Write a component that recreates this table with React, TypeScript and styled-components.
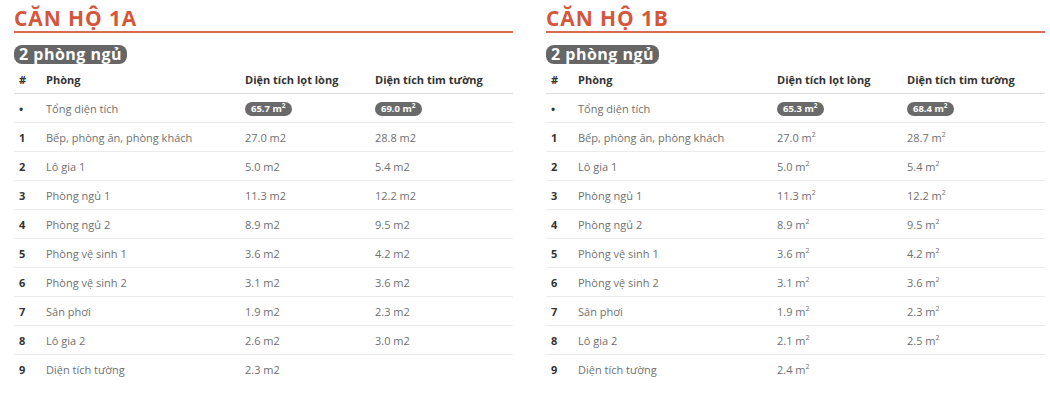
import React from 'react';
import styled, { createGlobalStyle } from 'styled-components';

const GlobalStyle = createGlobalStyle`
  body {
    margin: 0;
    background: #ffffff;
    font-family: "Open Sans", "Liberation Sans", sans-serif;
  }
`;

interface Room {
  no: string;
  name: string;
  inner: string;
  outer?: string;
}

interface Apartment {
  title: string;
  total: [string, string];
  sup: boolean;
  rooms: Room[];
}

const apartments: Apartment[] = [
  {
    title: 'CĂN HỘ 1A',
    total: ['65.7', '69.0'],
    sup: false,
    rooms: [
      { no: '1', name: 'Bếp, phòng ăn, phòng khách', inner: '27.0', outer: '28.8' },
      { no: '2', name: 'Lô gia 1', inner: '5.0', outer: '5.4' },
      { no: '3', name: 'Phòng ngủ 1', inner: '11.3', outer: '12.2' },
      { no: '4', name: 'Phòng ngủ 2', inner: '8.9', outer: '9.5' },
      { no: '5', name: 'Phòng vệ sinh 1', inner: '3.6', outer: '4.2' },
      { no: '6', name: 'Phòng vệ sinh 2', inner: '3.1', outer: '3.6' },
      { no: '7', name: 'Sân phơi', inner: '1.9', outer: '2.3' },
      { no: '8', name: 'Lô gia 2', inner: '2.6', outer: '3.0' },
      { no: '9', name: 'Diện tích tường', inner: '2.3' },
    ],
  },
  {
    title: 'CĂN HỘ 1B',
    total: ['65.3', '68.4'],
    sup: true,
    rooms: [
      { no: '1', name: 'Bếp, phòng ăn, phòng khách', inner: '27.0', outer: '28.7' },
      { no: '2', name: 'Lô gia 1', inner: '5.0', outer: '5.4' },
      { no: '3', name: 'Phòng ngủ 1', inner: '11.3', outer: '12.2' },
      { no: '4', name: 'Phòng ngủ 2', inner: '8.9', outer: '9.5' },
      { no: '5', name: 'Phòng vệ sinh 1', inner: '3.6', outer: '4.2' },
      { no: '6', name: 'Phòng vệ sinh 2', inner: '3.1', outer: '3.6' },
      { no: '7', name: 'Sân phơi', inner: '1.9', outer: '2.3' },
      { no: '8', name: 'Lô gia 2', inner: '2.1', outer: '2.5' },
      { no: '9', name: 'Diện tích tường', inner: '2.4' },
    ],
  },
];

const Page = styled.div`
  display: flex;
  gap: 33px;
  padding: 6px 0 0 14px;
`;

const Panel = styled.section`
  width: 499px;
`;

const Title = styled.h2`
  margin: 0;
  font-size: 21px;
  line-height: 24px;
  font-weight: 700;
  color: #d4573b;
  letter-spacing: 0.9px;
  padding-bottom: 1px;
  border-bottom: 2px solid #d86a4f;
`;

const Badge = styled.div`
  display: inline-block;
  margin-top: 12px;
  height: 19px;
  line-height: 19px;
  padding: 0 5px;
  border-radius: 8px;
  background: #666666;
  color: #ffffff;
  font-size: 16px;
  font-weight: 700;
  letter-spacing: 0.5px;
`;

const Row = styled.div<{ $head?: boolean; $last?: boolean }>`
  display: grid;
  grid-template-columns: 27px 199px 130px 1fr;
  align-items: center;
  height: 28px;
  padding-left: 5px;
  border-bottom: 1px solid ${p => (p.$last ? 'transparent' : p.$head ? '#dcdcdc' : '#ececec')};
  font-size: 11px;
  font-weight: ${p => (p.$head ? 700 : 400)};
  color: ${p => (p.$head ? '#333333' : '#707070')};
`;

const No = styled.span`
  font-weight: 700;
  color: #333333;
`;

const Pill = styled.span`
  display: inline-block;
  height: 14px;
  line-height: 14px;
  padding: 0 6px;
  border-radius: 7px;
  background: #6a6a6a;
  color: #ffffff;
  font-size: 9.5px;
  font-weight: 700;
  sup {
    font-size: 6.5px;
    line-height: 0;
  }
`;

const Sup = styled.sup`
  font-size: 7px;
  line-height: 0;
`;

const Area: React.FC<{ value?: string; sup: boolean }> = ({ value, sup }) => {
  if (!value) return <span />;
  return sup ? (
    <span>
      {value} m<Sup>2</Sup>
    </span>
  ) : (
    <span>{value} m2</span>
  );
};

const Table: React.FC<{ apt: Apartment }> = ({ apt }) => (
  <Panel>
    <Title>{apt.title}</Title>
    <Badge>2 phòng ngủ</Badge>
    <Row $head>
      <span>#</span>
      <span>Phòng</span>
      <span>Diện tích lọt lòng</span>
      <span>Diện tích tim tường</span>
    </Row>
    <Row>
      <No>•</No>
      <span>Tổng diện tích</span>
      <span>
        <Pill>
          {apt.total[0]} m<sup>2</sup>
        </Pill>
      </span>
      <span>
        <Pill>
          {apt.total[1]} m<sup>2</sup>
        </Pill>
      </span>
    </Row>
    {apt.rooms.map((r, i) => (
      <Row key={r.no} $last={i === apt.rooms.length - 1}>
        <No>{r.no}</No>
        <span>{r.name}</span>
        <Area value={r.inner} sup={apt.sup} />
        <Area value={r.outer} sup={apt.sup} />
      </Row>
    ))}
  </Panel>
);

const App: React.FC = () => (
  <>
    <GlobalStyle />
    <Page>
      {apartments.map(a => (
        <Table key={a.title} apt={a} />
      ))}
    </Page>
  </>
);

export default App;
